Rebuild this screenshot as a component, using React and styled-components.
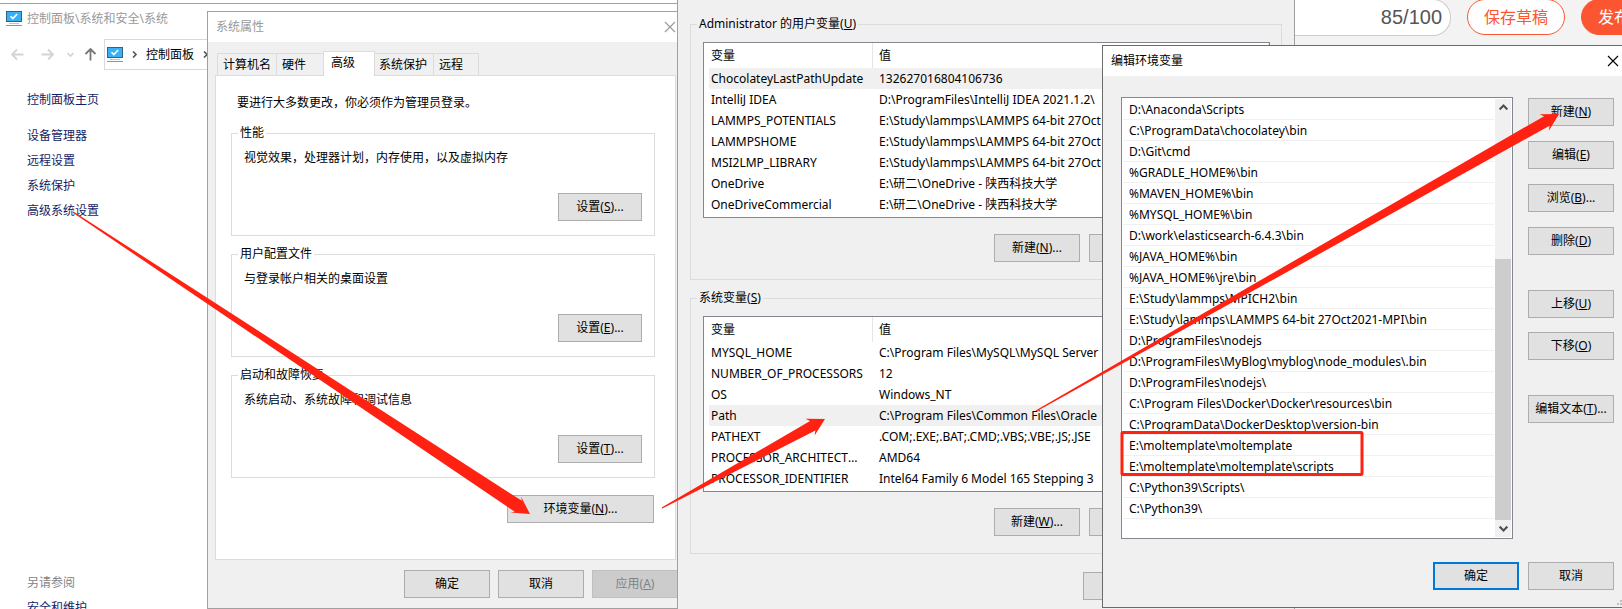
import React from 'react';
import styled, { createGlobalStyle, css } from 'styled-components';

const GlobalStyle = createGlobalStyle`
    * {
        box-sizing: border-box;
    }

    body {
        margin: 0;
        background: #fff;
        color: #000;
        font: 12px/16px "Noto Sans", "Noto Sans CJK SC", sans-serif;
    }

    button {
        font: inherit;
        color: inherit;
        padding: 0;
    }
`;

const Desktop = styled.main`
    position: relative;
    height: 100vh;
    overflow: hidden;
`;

const Window = styled.section`
    position: absolute;
    background: #f0f0f0;
    border: 1px solid #a0a0a0;
`;

const TitleBar = styled.header`
    display: flex;
    align-items: center;
    justify-content: space-between;
    height: 30px;
    padding: 0 ${({ $inactive }) => ($inactive ? 2 : 3)}px 0 8px;
    background: #fff;
    color: ${({ $inactive }) => ($inactive ? '#999' : '#000')};
`;

const Title = styled.h1`
    margin: 0;
    font-size: 12px;
    font-weight: 400;
`;

const CloseButton = styled.button`
    display: flex;
    border: 0;
    background: none;
`;

const Button = styled.button`
    flex: none;
    width: ${({ $width }) => $width || 86}px;
    height: 28px;
    border: 1px solid #adadad;
    background: #e1e1e1;
    white-space: nowrap;

    ${({ $primary }) => $primary && css`
        border: 2px solid #0078d7;
    `}

    &:disabled {
        border-color: #bfbfbf;
        background: #ccc;
        color: #838383;
    }
`;

const Group = styled.fieldset`
    min-width: 0;
    margin: 0 0 10px;
    padding: 0;
    border: 1px solid #dcdcdc;
`;

const Legend = styled.legend`
    margin-left: 6px;
    padding: 0 2px;
`;

const ButtonRow = styled.div`
    display: flex;
    justify-content: flex-end;
    gap: 9px;
`;

/* control panel window */

const Explorer = styled(Window)`
    top: 3px;
    left: 0;
    bottom: 0;
    width: 678px;
    background: #fff;
    border-width: 1px 0 0;
`;

const ExplorerTitle = styled.header`
    display: flex;
    align-items: center;
    gap: 5px;
    height: 30px;
    padding-left: 6px;
    color: #999;
`;

const NavBar = styled.nav`
    display: flex;
    align-items: center;
    height: 41px;
    padding-left: 5px;
`;

const NavButton = styled.button`
    display: flex;
    flex: none;
    justify-content: center;
    width: ${({ $width }) => $width}px;
    border: 0;
    background: none;
`;

const AddressBar = styled.div`
    display: flex;
    flex: 1;
    align-items: center;
    gap: 8px;
    height: 31px;
    padding-left: 2px;
    border: 1px solid #d9d9d9;
`;

const Sidebar = styled.aside`
    display: flex;
    flex-direction: column;
    align-items: flex-start;
    gap: 9px;
    padding: 17px 0 0 27px;
`;

const SideLink = styled.a`
    color: #151c66;
    text-decoration: none;

    &:first-child {
        margin-bottom: 11px;
    }
`;

const SeeAlso = styled.span`
    margin-top: 347px;
    color: #838383;
`;

/* system properties */

const SystemDialog = styled(Window)`
    top: 11px;
    left: 207px;
    width: 472px;
`;

const Tabs = styled.div`
    display: flex;
    align-items: flex-end;
    height: 33px;
    padding-left: 9px;
`;

const Tab = styled.button`
    width: ${({ $width }) => $width}px;
    height: 22px;
    padding-left: 5px;
    border: solid #dcdcdc;
    border-width: 1px 0 0 1px;
    background: #f0f0f0;
    text-align: left;

    &:last-child {
        border-right-width: 1px;
    }

    ${({ $selected }) => $selected && css`
        height: 25px;
        margin-bottom: -1px;
        padding: 0 0 2px 7px;
        border-right-width: 1px;
        background: #fff;
        z-index: 1;

        & + button {
            padding-left: 4px;
            border-left: 0;
        }
    `}
`;

const TabPanel = styled.div`
    margin: 0 2px 10px 7px;
    padding: 19px 20px 36px 15px;
    border: 1px solid #dcdcdc;
    background: #fff;
`;

const Notice = styled.p`
    margin: 0 0 14px 6px;
`;

const GroupBody = styled.div`
    display: flex;
    flex-direction: column;
    gap: 27px;
    align-items: flex-end;
    padding: 9px 12px 14px;
`;

const GroupText = styled.p`
    align-self: stretch;
    margin: 0;
`;

const EnvButtonRow = styled(ButtonRow)`
    padding: 7px 1px 0 0;
`;

const DialogFooter = styled(ButtonRow)`
    gap: 8px;
    padding-bottom: 10px;
`;

/* environment variables */

const VariablesDialog = styled(Window)`
    top: 0;
    left: 677px;
    bottom: 0;
    width: 618px;
    padding: 16px 12px 0;
    border-width: 0 1px;
`;

const VariablesBody = styled.div`
    padding: 10px 11px 17px 12px;
`;

const TableBox = styled.div`
    margin-bottom: 16px;
    padding: 0 0 2px 5px;
    border: 1px solid #828790;
    background: #fff;
`;

const VariableTable = styled.table`
    width: 100%;
    table-layout: fixed;
    border-collapse: separate;
    border-spacing: 0;
    text-align: left;
    font-size: 12px;
`;

const HeadCell = styled.th`
    width: ${({ $width }) => ($width ? `${$width}px` : 'auto')};
    height: 25px;
    padding: 0 0 0 ${({ $width }) => ($width ? 2 : 6)}px;
    border-right: 1px solid #e5e5e5;
    font-weight: 400;
`;

const Row = styled.tr`
    background: ${({ $selected }) => ($selected ? '#f0f0f0' : '#fff')};
`;

const Cell = styled.td`
    height: 21px;
    padding: 0 8px 0 2px;
    overflow: hidden;
    text-overflow: ellipsis;
    white-space: nowrap;

    & + & {
        padding-left: 6px;
    }
`;

const VariablesFooter = styled(ButtonRow)`
    padding: 8px 18px 0;
`;

/* editor page behind the dialogs */

const EditorPage = styled.section`
    position: absolute;
    top: 0;
    right: 0;
    bottom: 0;
    left: 1294px;
    background: #f3f3f3;
`;

const EditorBar = styled.header`
    display: flex;
    align-items: flex-start;
    gap: 16px;
    margin-top: -1px;
    font-size: 16px;
`;

const TitleCounter = styled.div`
    display: flex;
    flex: none;
    align-items: center;
    justify-content: flex-end;
    width: 157px;
    height: 37px;
    padding-right: 8px;
    border: 1px solid #ccc;
    border-left: 0;
    border-radius: 0 18px 18px 0;
    background: #fff;
    color: #555;
    font: 20px "Liberation Sans", Arial, sans-serif;
`;

const PillButton = styled.button`
    flex: none;
    width: 98px;
    height: 36px;
    border: 1px solid #fc5531;
    border-radius: 18px;
    background: ${({ $filled }) => ($filled ? '#fc5531' : '#fff')};
    color: ${({ $filled }) => ($filled ? '#fff' : '#fc5531')};
`;

/* edit environment variable */

const EditDialog = styled(Window)`
    top: 45px;
    left: 1102px;
    right: 0;
    border-color: #6b6b6b;
    border-right: 0;
`;

const EditBody = styled.div`
    display: flex;
    gap: 15px;
    padding: 21px 8px 23px 18px;
`;

const PathBox = styled.div`
    display: flex;
    flex: 1;
    min-width: 0;
    padding: 1px;
    border: 1px solid #828790;
    background: #fff;
`;

const PathList = styled.ul`
    flex: 1;
    min-width: 0;
    margin: 0 1px 18px 0;
    padding: 0;
    list-style: none;
`;

const PathItem = styled.li`
    height: 21px;
    padding-left: 6px;
    border-bottom: 1px solid #f0f0f0;
    line-height: 22px;
    white-space: nowrap;
`;

const ScrollBar = styled.div`
    display: flex;
    flex-direction: column;
    justify-content: space-between;
    width: 16px;
    background: #f0f0f0;
`;

const ScrollButton = styled.button`
    display: flex;
    align-items: center;
    justify-content: center;
    height: 17px;
    border: 0;
    background: none;
`;

const ScrollThumb = styled.div`
    height: 261px;
    margin-top: auto;
    background: #cdcdcd;
`;

const Actions = styled.div`
    display: flex;
    flex-direction: column;
    gap: 35px;
    padding-top: 1px;
`;

const ActionGroup = styled.div`
    display: flex;
    flex-direction: column;
    gap: ${({ $gap }) => $gap}px;
`;

const EditFooter = styled(ButtonRow)`
    padding: 0 8px 17px;
`;

const Grip = styled.svg`
    position: absolute;
    right: 0;
    bottom: 1px;
`;

const Markup = styled.svg`
    position: absolute;
    top: 0;
    left: 0;
    pointer-events: none;
`;

const userVariables = [
    ['ChocolateyLastPathUpdate', '132627016804106736'],
    ['IntelliJ IDEA', 'D:\\ProgramFiles\\IntelliJ IDEA 2021.1.2\\'],
    ['LAMMPS_POTENTIALS', 'E:\\Study\\lammps\\LAMMPS 64-bit 27Oct'],
    ['LAMMPSHOME', 'E:\\Study\\lammps\\LAMMPS 64-bit 27Oct'],
    ['MSI2LMP_LIBRARY', 'E:\\Study\\lammps\\LAMMPS 64-bit 27Oct'],
    ['OneDrive', 'E:\\研二\\OneDrive - 陕西科技大学'],
    ['OneDriveCommercial', 'E:\\研二\\OneDrive - 陕西科技大学'],
];

const systemVariables = [
    ['MYSQL_HOME', 'C:\\Program Files\\MySQL\\MySQL Server'],
    ['NUMBER_OF_PROCESSORS', '12'],
    ['OS', 'Windows_NT'],
    ['Path', 'C:\\Program Files\\Common Files\\Oracle'],
    ['PATHEXT', '.COM;.EXE;.BAT;.CMD;.VBS;.VBE;.JS;.JSE'],
    ['PROCESSOR_ARCHITECTURE', 'AMD64'],
    ['PROCESSOR_IDENTIFIER', 'Intel64 Family 6 Model 165 Stepping 3'],
];

const paths = [
    'D:\\Anaconda\\Scripts',
    'C:\\ProgramData\\chocolatey\\bin',
    'D:\\Git\\cmd',
    '%GRADLE_HOME%\\bin',
    '%MAVEN_HOME%\\bin',
    '%MYSQL_HOME%\\bin',
    'D:\\work\\elasticsearch-6.4.3\\bin',
    '%JAVA_HOME%\\bin',
    '%JAVA_HOME%\\jre\\bin',
    'E:\\Study\\lammps\\MPICH2\\bin',
    'E:\\Study\\lammps\\LAMMPS 64-bit 27Oct2021-MPI\\bin',
    'D:\\ProgramFiles\\nodejs',
    'D:\\ProgramFiles\\MyBlog\\myblog\\node_modules\\.bin',
    'D:\\ProgramFiles\\nodejs\\',
    'C:\\Program Files\\Docker\\Docker\\resources\\bin',
    'C:\\ProgramData\\DockerDesktop\\version-bin',
    'E:\\moltemplate\\moltemplate',
    'E:\\moltemplate\\moltemplate\\scripts',
    'C:\\Python39\\Scripts\\',
    'C:\\Python39\\',
];

const groups = [
    { name: '性能', text: '视觉效果，处理器计划，内存使用，以及虚拟内存', hotkey: 'S' },
    { name: '用户配置文件', text: '与登录帐户相关的桌面设置', hotkey: 'E' },
    { name: '启动和故障恢复', text: '系统启动、系统故障和调试信息', hotkey: 'T' },
];

// label with its underlined access key, e.g. 新建(N)...
const Label = ({ text, hotkey, more }) => (
    <>{text}(<u>{hotkey}</u>){more && '...'}</>
);

const MonitorIcon = () => (
    <svg width="16" height="16" viewBox="0 0 16 16">
        <rect x="0.5" y="0.5" width="15" height="10" fill="#38b0f5" stroke="#34617f" />
        <path d="M4.5 5.2l2.3 2.3 4.4-4.5" fill="none" stroke="#fff" strokeWidth="1.6" />
        <path d="M3 12.5h10" stroke="#b9c6d2" />
        <path d="M0 14.5h16" stroke="#8097ad" />
    </svg>
);

const CrossIcon = () => (
    <svg width="12" height="12" viewBox="0 0 12 12">
        <path d="M1 1l10 10M11 1L1 11" fill="none" stroke="currentColor" strokeWidth="1.1" />
    </svg>
);

const ArrowIcon = ({ color, angle = 0 }) => (
    <svg width="13" height="13" viewBox="0 0 13 13">
        <path d="M12.5 6.5H1M6 1.5l-5 5 5 5" fill="none" stroke={color} strokeWidth="1.8" transform={`rotate(${angle} 6.5 6.5)`} />
    </svg>
);

const ChevronIcon = ({ color, angle = 0, size = 7 }) => (
    <svg width={size} height={size} viewBox="0 0 7 7">
        <path d="M0.5 2l3 3 3-3" fill="none" stroke={color} strokeWidth="1.6" transform={`rotate(${angle} 3.5 3.5)`} />
    </svg>
);

// tapered arrow: hairline at the start, widest where it meets the head
const Arrow = ({ from, to, neck }) => {
    const dx = to[0] - from[0];
    const dy = to[1] - from[1];
    const length = Math.hypot(dx, dy);
    const at = (along, side) => [
        from[0] + (dx * along - dy * side) / length,
        from[1] + (dy * along + dx * side) / length,
    ].join(',');
    const points = [
        at(0, -0.7), at(length - 14, -neck), at(length - 17, -9.5), at(length, 0),
        at(length - 17, 9.5), at(length - 14, neck), at(0, 0.7),
    ];
    return <polygon points={points.join(' ')} fill="#ff2212" />;
};

const Variables = ({ legend, rows, selected, hotkey }) => (
    <Group>
        <Legend>{legend}</Legend>
        <VariablesBody>
            <TableBox>
                <VariableTable>
                    <thead>
                        <tr>
                            <HeadCell $width={164}>变量</HeadCell>
                            <HeadCell>值</HeadCell>
                        </tr>
                    </thead>
                    <tbody>
                        {rows.map(([name, value]) => (
                            <Row key={name} $selected={name === selected}>
                                <Cell>{name}</Cell>
                                <Cell>{value}</Cell>
                            </Row>
                        ))}
                    </tbody>
                </VariableTable>
            </TableBox>
            <ButtonRow>
                <Button><Label text="新建" hotkey={hotkey} more /></Button>
                <Button aria-label="编辑" />
                <Button aria-label="删除" />
            </ButtonRow>
        </VariablesBody>
    </Group>
);

const App = () => (
    <>
        <GlobalStyle />
        <Desktop>
            <Explorer>
                <ExplorerTitle>
                    <MonitorIcon />
                    控制面板\系统和安全\系统
                </ExplorerTitle>
                <NavBar>
                    <NavButton $width={24} aria-label="后退"><ArrowIcon color="#d4d4d4" /></NavButton>
                    <NavButton $width={36} aria-label="前进"><ArrowIcon color="#d4d4d4" angle={180} /></NavButton>
                    <NavButton $width={11} aria-label="历史记录"><ChevronIcon color="#d4d4d4" /></NavButton>
                    <NavButton $width={28} aria-label="向上"><ArrowIcon color="#777" angle={90} /></NavButton>
                    <AddressBar>
                        <MonitorIcon />
                        <ChevronIcon color="#555" angle={-90} />
                        <span>控制面板</span>
                        <ChevronIcon color="#555" angle={-90} />
                    </AddressBar>
                </NavBar>
                <Sidebar>
                    <SideLink href="#home">控制面板主页</SideLink>
                    <SideLink href="#devices">设备管理器</SideLink>
                    <SideLink href="#remote">远程设置</SideLink>
                    <SideLink href="#protection">系统保护</SideLink>
                    <SideLink href="#advanced">高级系统设置</SideLink>
                    <SeeAlso>另请参阅</SeeAlso>
                    <SideLink href="#security">安全和维护</SideLink>
                </Sidebar>
            </Explorer>

            <SystemDialog>
                <TitleBar $inactive>
                    <Title>系统属性</Title>
                    <CloseButton aria-label="关闭"><CrossIcon /></CloseButton>
                </TitleBar>
                <Tabs role="tablist">
                    <Tab role="tab" $width={59}>计算机名</Tab>
                    <Tab role="tab" $width={47}>硬件</Tab>
                    <Tab role="tab" $width={52} $selected aria-selected>高级</Tab>
                    <Tab role="tab" $width={58}>系统保护</Tab>
                    <Tab role="tab" $width={46}>远程</Tab>
                </Tabs>
                <TabPanel role="tabpanel">
                    <Notice>要进行大多数更改，你必须作为管理员登录。</Notice>
                    {groups.map(({ name, text, hotkey }) => (
                        <Group key={name}>
                            <Legend>{name}</Legend>
                            <GroupBody>
                                <GroupText>{text}</GroupText>
                                <Button $width={84}><Label text="设置" hotkey={hotkey} more /></Button>
                            </GroupBody>
                        </Group>
                    ))}
                    <EnvButtonRow>
                        <Button $width={147}><Label text="环境变量" hotkey="N" more /></Button>
                    </EnvButtonRow>
                </TabPanel>
                <DialogFooter>
                    <Button>确定</Button>
                    <Button>取消</Button>
                    <Button disabled><Label text="应用" hotkey="A" /></Button>
                </DialogFooter>
            </SystemDialog>

            <EditorPage>
                <EditorBar>
                    <TitleCounter>85/100</TitleCounter>
                    <PillButton>保存草稿</PillButton>
                    <PillButton $filled>发布文章</PillButton>
                </EditorBar>
            </EditorPage>

            <VariablesDialog>
                <Variables
                    legend={<Label text="Administrator 的用户变量" hotkey="U" />}
                    rows={userVariables}
                    selected="ChocolateyLastPathUpdate"
                    hotkey="N"
                />
                <Variables
                    legend={<Label text="系统变量" hotkey="S" />}
                    rows={systemVariables}
                    selected="Path"
                    hotkey="W"
                />
                <VariablesFooter>
                    <Button aria-label="确定" />
                    <Button aria-label="取消" />
                </VariablesFooter>
            </VariablesDialog>

            <EditDialog>
                <TitleBar>
                    <Title>编辑环境变量</Title>
                    <CloseButton aria-label="关闭"><CrossIcon /></CloseButton>
                </TitleBar>
                <EditBody>
                    <PathBox>
                        <PathList>
                            {paths.map(path => <PathItem key={path}>{path}</PathItem>)}
                        </PathList>
                        <ScrollBar>
                            <ScrollButton aria-label="向上滚动"><ChevronIcon color="#505050" angle={180} size={9} /></ScrollButton>
                            <ScrollThumb />
                            <ScrollButton aria-label="向下滚动"><ChevronIcon color="#505050" size={9} /></ScrollButton>
                        </ScrollBar>
                    </PathBox>
                    <Actions>
                        <ActionGroup $gap={15}>
                            <Button><Label text="新建" hotkey="N" /></Button>
                            <Button><Label text="编辑" hotkey="E" /></Button>
                            <Button><Label text="浏览" hotkey="B" more /></Button>
                            <Button><Label text="删除" hotkey="D" /></Button>
                        </ActionGroup>
                        <ActionGroup $gap={14}>
                            <Button><Label text="上移" hotkey="U" /></Button>
                            <Button><Label text="下移" hotkey="O" /></Button>
                        </ActionGroup>
                        <Button><Label text="编辑文本" hotkey="T" more /></Button>
                    </Actions>
                </EditBody>
                <EditFooter>
                    <Button $primary>确定</Button>
                    <Button>取消</Button>
                </EditFooter>
                <Grip width="5" height="6" viewBox="0 0 5 6">
                    <path d="M0 3h2v2H0zM3 3h2v2H3zM3 0h2v2H3z" fill="#bfbfbf" />
                </Grip>
            </EditDialog>

            <Markup width="1622" height="609">
                <Arrow from={[73, 212]} to={[530, 514]} neck={6.5} />
                <Arrow from={[662, 508]} to={[825, 419]} neck={5.5} />
                <Arrow from={[1036, 411]} to={[1559, 114]} neck={5.5} />
                <rect x="1122" y="432.5" width="240" height="42" rx="1" fill="none" stroke="#ff2212" strokeWidth="3" />
            </Markup>
        </Desktop>
    </>
);

export default App;
